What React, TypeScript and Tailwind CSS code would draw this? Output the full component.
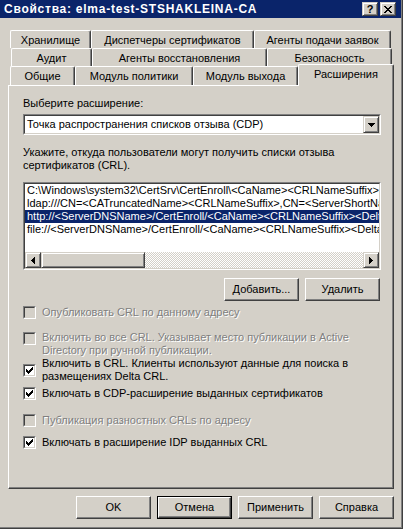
import React from "react";

const Check = () => (
  <svg width="7" height="7" viewBox="0 0 7 7" shapeRendering="crispEdges">
    <path
      d="M0 2h1v3H0zM1 3h1v3H1zM2 4h1v3H2zM3 3h1v3H3zM4 2h1v3H4zM5 1h1v3H5zM6 0h1v3H6z"
      fill="#000"
    />
  </svg>
);

const DownArrow = () => (
  <svg width="7" height="4" viewBox="0 0 7 4" shapeRendering="crispEdges">
    <path d="M0 0h7v1H0zM1 1h5v1H1zM2 2h3v1H2zM3 3h1v1H3z" fill="#000" />
  </svg>
);

const LeftArrow = () => (
  <svg width="4" height="7" viewBox="0 0 4 7" shapeRendering="crispEdges">
    <path d="M0 3h1v1H0zM1 2h1v3H1zM2 1h1v5H2zM3 0h1v7H3z" fill="#000" />
  </svg>
);

const RightArrow = () => (
  <svg width="4" height="7" viewBox="0 0 4 7" shapeRendering="crispEdges">
    <path d="M3 3h1v1H3zM2 2h1v3H2zM1 1h1v5H1zM0 0h1v7H0z" fill="#000" />
  </svg>
);

const CloseX = () => (
  <svg width="8" height="7" viewBox="0 0 8 7" shapeRendering="crispEdges">
    <path
      d="M0 0h2v1H0zM6 0h2v1H6zM1 1h2v1H1zM5 1h2v1H5zM2 2h4v1H2zM3 3h2v1H3zM2 4h4v1H2zM1 5h2v1H1zM5 5h2v1H5zM0 6h2v1H0zM6 6h2v1H6z"
      fill="#000"
    />
  </svg>
);

function Box({ checked, disabled }: { checked?: boolean; disabled?: boolean }) {
  return (
    <div className="w-[13px] h-[13px] shrink-0 border border-t-[#808080] border-l-[#808080] border-r-white border-b-white">
      <div
        className={
          disabled
            ? "w-full h-full border border-t-[#404040] border-l-[#404040] border-r-[#d4d0c8] border-b-[#d4d0c8] bg-[#d4d0c8] flex items-center justify-center"
            : "w-full h-full border border-t-[#404040] border-l-[#404040] border-r-[#d4d0c8] border-b-[#d4d0c8] bg-white flex items-center justify-center"
        }
      >
        {checked ? <Check /> : null}
      </div>
    </div>
  );
}

const dis = "text-[#808080] [text-shadow:1px_1px_0_#ffffff]";

function Tab({ label, cls }: { label: string; cls: string }) {
  return (
    <div
      className={
        "shrink-0 flex justify-center pt-[3px] whitespace-nowrap border-l border-t border-r border-l-white border-t-white border-r-[#404040] rounded-tl-[2px] rounded-tr-[2px] shadow-[inset_-1px_0_0_#808080] bg-[#d4d0c8] " +
        cls
      }
    >
      {label}
    </div>
  );
}

function Btn({ label, def }: { label: string; def?: boolean }) {
  if (def) {
    return (
      <div className="w-[75px] h-[23px] border border-black flex">
        <div className="flex-1 flex items-center justify-center border border-t-white border-l-white border-r-[#404040] border-b-[#404040] shadow-[inset_-1px_-1px_0_#808080]">
          {label}
        </div>
      </div>
    );
  }
  return (
    <div className="w-[75px] h-[23px] flex items-center justify-center border border-t-white border-l-white border-r-[#404040] border-b-[#404040] shadow-[inset_-1px_-1px_0_#808080]">
      {label}
    </div>
  );
}

const items = [
  "C:\\Windows\\system32\\CertSrv\\CertEnroll\\<CaName><CRLNameSuffix><DeltaCRLAllowed>.crl",
  "ldap:///CN=<CATruncatedName><CRLNameSuffix>,CN=<ServerShortName>,CN=CDP,CN=Public Key Services",
  "http://<ServerDNSName>/CertEnroll/<CaName><CRLNameSuffix><DeltaCRLAllowed>.crl",
  "file://<ServerDNSName>/CertEnroll/<CaName><CRLNameSuffix><DeltaCRLAllowed>.crl",
];

export default function App() {
  return (
    <div className="w-[403px] h-[529px] overflow-hidden bg-[#d4d0c8] font-['Liberation_Sans',Arial,sans-serif] text-[11px] leading-[13px] text-black select-none">
      <div className="h-full border-r border-b border-[#404040]">
        <div className="h-full flex flex-col border-r border-b border-[#808080]">
          {/* Title bar */}
          <div className="h-[18px] shrink-0 bg-[#0a246a] flex items-center pl-[4px] pr-[5px]">
            <span className="flex-1 text-white font-bold text-[12px] tracking-[0.75px] leading-[18px] whitespace-nowrap">
              Свойства: elma-test-STSHAKLEINA-CA
            </span>
            <div className="flex gap-[2px]">
              <div className="w-[16px] h-[14px] flex items-center justify-center border border-t-[#d4d0c8] border-l-[#d4d0c8] border-r-[#404040] border-b-[#404040] shadow-[inset_1px_1px_0_#ffffff,inset_-1px_-1px_0_#808080] bg-[#d4d0c8] font-bold text-[11px] leading-[11px]">
                ?
              </div>
              <div className="w-[16px] h-[14px] flex items-center justify-center border border-t-[#d4d0c8] border-l-[#d4d0c8] border-r-[#404040] border-b-[#404040] shadow-[inset_1px_1px_0_#ffffff,inset_-1px_-1px_0_#808080] bg-[#d4d0c8]">
                <CloseX />
              </div>
            </div>
          </div>

          {/* Tabs */}
          <div className="pt-[12px] flex flex-col">
            <div className="flex h-[18px] pl-[10px]">
              <Tab label="Хранилище" cls="w-[81px]" />
              <Tab label="Диспетчеры сертификатов" cls="w-[163px]" />
              <Tab label="Агенты подачи заявок" cls="w-[137px]" />
            </div>
            <div className="flex h-[18px] pl-[11px]">
              <Tab label="Аудит" cls="w-[81px]" />
              <Tab label="Агенты восстановления" cls="w-[175px]" />
              <Tab label="Безопасность" cls="w-[125px]" />
            </div>
            <div className="flex items-end h-[19px] pl-[10px]">
              <Tab label="Общие" cls="w-[65px] h-[19px]" />
              <Tab label="Модуль политики" cls="w-[118px] h-[19px]" />
              <Tab label="Модуль выхода" cls="w-[105px] h-[19px]" />
              <Tab label="Расширения" cls="w-[96px] h-[22px] -mb-[1px] relative z-10" />
            </div>
          </div>

          {/* Panel */}
          <div className="ml-[8px] w-[386px] h-[404px] shrink-0 flex flex-col pt-[11px] pl-[14px] pr-[12px] border border-t-white border-l-white border-r-[#404040] border-b-[#404040] shadow-[inset_-1px_-1px_0_#808080]">
            <div className="h-[13px]">Выберите расширение:</div>

            {/* Combobox */}
            <div className="mt-[4px] h-[21px] shrink-0 border border-t-[#808080] border-l-[#808080] border-r-white border-b-white">
              <div className="h-full flex items-center bg-white border border-t-[#404040] border-l-[#404040] border-r-[#d4d0c8] border-b-[#d4d0c8]">
                <span className="flex-1 pl-[2px] whitespace-nowrap">
                  Точка распространения списков отзыва (CDP)
                </span>
                <div className="w-[16px] h-full flex items-center justify-center border border-t-[#d4d0c8] border-l-[#d4d0c8] border-r-[#404040] border-b-[#404040] shadow-[inset_1px_1px_0_#ffffff,inset_-1px_-1px_0_#808080] bg-[#d4d0c8]">
                  <DownArrow />
                </div>
              </div>
            </div>

            <div className="mt-[11px]">
              Укажите, откуда пользователи могут получить списки отзыва
              <br />
              сертификатов (CRL).
            </div>

            {/* List box */}
            <div className="mt-[10px] h-[88px] shrink-0 border border-t-[#808080] border-l-[#808080] border-r-white border-b-white">
              <div className="h-full flex flex-col bg-white border border-t-[#404040] border-l-[#404040] border-r-[#d4d0c8] border-b-[#d4d0c8]">
                <div className="flex-1 overflow-hidden whitespace-nowrap">
                  {items.map((t, i) => (
                    <div
                      key={i}
                      className={
                        i === 2
                          ? "h-[13px] pl-[2px] bg-[#0a246a] text-white"
                          : "h-[13px] pl-[2px]"
                      }
                    >
                      {t}
                    </div>
                  ))}
                </div>
                <div className="h-[16px] flex shrink-0">
                  <div className="w-[16px] h-full flex items-center justify-center border border-t-[#d4d0c8] border-l-[#d4d0c8] border-r-[#404040] border-b-[#404040] shadow-[inset_1px_1px_0_#ffffff,inset_-1px_-1px_0_#808080] bg-[#d4d0c8]">
                    <LeftArrow />
                  </div>
                  <div className="w-[104px] h-full border border-t-[#d4d0c8] border-l-[#d4d0c8] border-r-[#404040] border-b-[#404040] shadow-[inset_1px_1px_0_#ffffff,inset_-1px_-1px_0_#808080] bg-[#d4d0c8]" />
                  <div className="flex-1 h-full bg-[image:repeating-conic-gradient(#ffffff_0_25%,#d4d0c8_0_50%)] bg-[length:2px_2px]" />
                  <div className="w-[16px] h-full flex items-center justify-center border border-t-[#d4d0c8] border-l-[#d4d0c8] border-r-[#404040] border-b-[#404040] shadow-[inset_1px_1px_0_#ffffff,inset_-1px_-1px_0_#808080] bg-[#d4d0c8]">
                    <RightArrow />
                  </div>
                </div>
              </div>
            </div>

            {/* Add / remove */}
            <div className="mt-[8px] flex justify-end gap-[6px] pr-[1px]">
              <Btn label="Добавить..." />
              <Btn label="Удалить" />
            </div>

            {/* Checkboxes */}
            <div className="mt-[5px] flex items-start gap-[6px]">
              <Box disabled />
              <span className={dis}>Опубликовать CRL по данному адресу</span>
            </div>
            <div className="mt-[12px] flex items-start gap-[6px]">
              <div className="mt-[1px]">
                <Box disabled />
              </div>
              <span className={dis}>
                Включить во все CRL. Указывает место публикации в Active
                <br />
                Directory при ручной публикации.
              </span>
            </div>
            <div className="flex items-center gap-[6px]">
              <Box checked />
              <span>
                Включить в CRL. Клиенты используют данные для поиска в
                <br />
                размещениях Delta CRL.
              </span>
            </div>
            <div className="mt-[4px] flex items-start gap-[6px]">
              <Box checked />
              <span>Включать в CDP-расширение выданных сертификатов</span>
            </div>
            <div className="mt-[14px] flex items-start gap-[6px]">
              <Box disabled />
              <span className={dis}>Публикация разностных CRLs по адресу</span>
            </div>
            <div className="mt-[9px] flex items-start gap-[6px]">
              <Box checked />
              <span>Включать в расширение IDP выданных CRL</span>
            </div>
          </div>

          {/* Dialog buttons */}
          <div className="mt-[7px] flex justify-end gap-[6px] pr-[7px]">
            <Btn label="OK" />
            <Btn label="Отмена" def />
            <Btn label="Применить" />
            <Btn label="Справка" />
          </div>
        </div>
      </div>
    </div>
  );
}
